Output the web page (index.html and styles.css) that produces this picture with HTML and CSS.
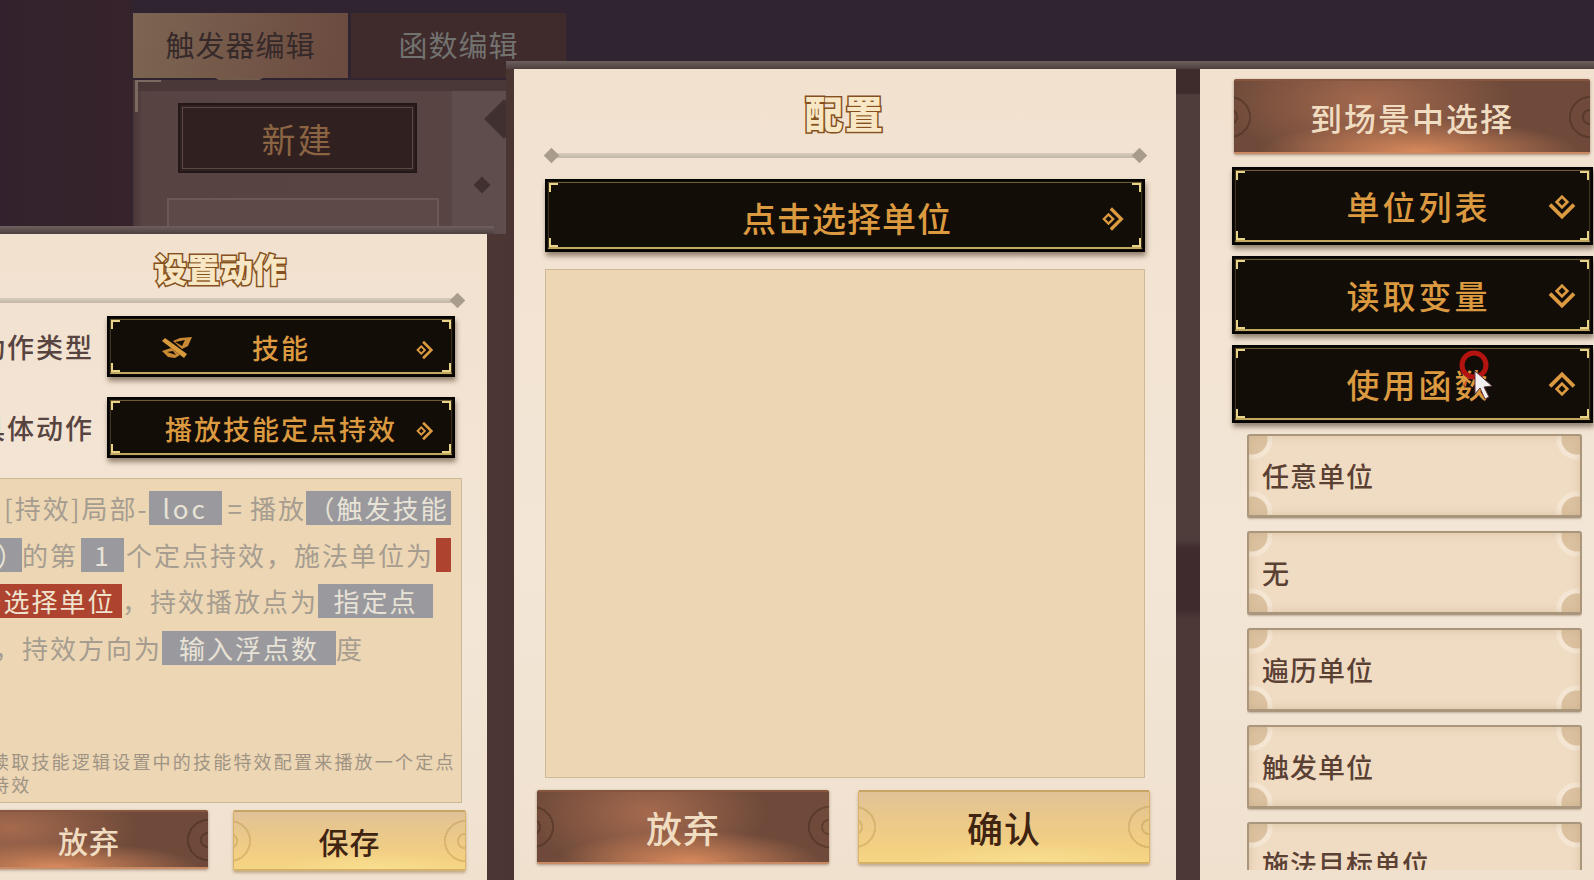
FILE: index.html
```html
<!DOCTYPE html>
<html lang="zh-CN">
<head>
  <meta charset="UTF-8">
  <title>触发器编辑</title>
  <link rel="stylesheet" href="styles.css">
</head>
<body>
  <svg class="defs" width="0" height="0">
    <symbol id="arrow" viewBox="0 0 24 24">
      <path d="M5 12l4-4 4 4-4 4z" fill="none" stroke="currentColor" stroke-width="2"/>
      <path d="M12 2l10 10-10 10-2-2 8-8-8-8z" fill="currentColor"/>
    </symbol>
  </svg>

  <div class="stage">

    <!-- 后面的触发器窗口 -->
    <div class="win win-back">
      <div class="tabs">
        <div class="tab tab-on">触发器编辑</div>
        <div class="tab">函数编辑</div>
      </div>
      <div class="back-body">
        <span class="back-corner"></span>
        <div class="back-main">
          <div class="btn-new">新建</div>
          <div class="back-slot"></div>
        </div>
        <div class="back-side">
          <span class="back-gem back-gem-a"></span>
          <span class="back-gem back-gem-b"></span>
        </div>
      </div>
    </div>

    <!-- 设置动作 -->
    <div class="win win-left">
      <div class="win-bar"></div>
      <div class="panel left-panel">
        <div class="title title-left">设置动作</div>
        <div class="divider divider-left"></div>
        <div class="field">
          <div class="field-label">动作类型</div>
          <div class="dark-btn dark-sm">
            <svg class="skill-icon" viewBox="0 0 32 24">
              <path d="M1 5l3-3 22 16-3 4z" fill="#d99a3c"/>
              <path d="M12 5l7-3 12-1-4 9-6 3z" fill="#c98a34"/>
              <path d="M14 6l10-2-3 6z" fill="#160e08"/>
              <path d="M1 15l9-3 9 7-5 3-7-1z" fill="#c98a34"/>
              <path d="M6 16l6-1 3 4z" fill="#160e08"/>
            </svg>
            <span class="dark-text">技能</span>
            <svg class="arrow arrow-sm"><use href="#arrow"/></svg>
          </div>
        </div>
        <div class="field">
          <div class="field-label">具体动作</div>
          <div class="dark-btn dark-sm">
            <span class="dark-text">播放技能定点持效</span>
            <svg class="arrow arrow-sm"><use href="#arrow"/></svg>
          </div>
        </div>
        <div class="text-box desc-box">
          <div class="desc-line line-a">[持效]局部-<span class="hl hl-loc">loc</span><span class="eq">=</span>播放<span class="hl hl-skill">（触发技能</span></div>
          <div class="desc-line"><span class="hl hl-end">技能）</span>的第<span class="hl hl-num">1</span>个定点持效，施法单位为<span class="hl hl-red hl-stub"></span></div>
          <div class="desc-line"><span class="hl hl-red">点击选择单位</span>，持效播放点为<span class="hl hl-point">指定点</span></div>
          <div class="desc-line line-d">，持效方向为<span class="hl hl-float">输入浮点数</span>度</div>
          <div class="desc-note">读取技能逻辑设置中的技能特效配置来播放一个定点<br>持效</div>
        </div>
        <div class="btn-row btn-row-left">
          <div class="btn btn-brown btn-left-give">放弃</div>
          <div class="btn btn-gold btn-left-save">保存</div>
        </div>
      </div>
    </div>

    <!-- 配置 -->
    <div class="win win-mid">
      <div class="win-bar"></div>
      <div class="panel mid-panel">
        <div class="title title-mid">配置</div>
        <div class="divider divider-mid"></div>
        <div class="dark-btn dark-mid">
          <span class="dark-text dark-text-mid">点击选择单位</span>
          <svg class="arrow arrow-mid"><use href="#arrow"/></svg>
        </div>
        <div class="text-box mid-box"></div>
        <div class="btn-row btn-row-mid">
          <div class="btn btn-brown">放弃</div>
          <div class="btn btn-gold">确认</div>
        </div>
      </div>
    </div>

    <!-- 右侧选择列表 -->
    <div class="win win-right">
      <div class="win-bar"></div>
      <div class="panel right-panel">
        <div class="btn btn-brown btn-scene">到场景中选择</div>
        <div class="dark-btn dark-lg">
          <span class="dark-text dark-text-lg">单位列表</span>
          <svg class="arrow arrow-down"><use href="#arrow"/></svg>
        </div>
        <div class="dark-btn dark-lg">
          <span class="dark-text dark-text-lg">读取变量</span>
          <svg class="arrow arrow-down"><use href="#arrow"/></svg>
        </div>
        <div class="dark-btn dark-lg">
          <span class="dark-text dark-text-lg">使用函数</span>
          <svg class="arrow arrow-up"><use href="#arrow"/></svg>
        </div>
        <div class="pick-list">
          <div class="pick">任意单位</div>
          <div class="pick">无</div>
          <div class="pick">遍历单位</div>
          <div class="pick">触发单位</div>
          <div class="pick">施法目标单位</div>
        </div>
      </div>
    </div>

    <!-- 录屏鼠标 -->
    <svg class="cursor" viewBox="0 0 40 60">
      <circle cx="18" cy="15" r="12" fill="none" stroke="#b3140f" stroke-width="5"/>
      <path d="M11 30l-4 4 3 3z" fill="#e0662a"/>
      <path d="M19 21l0 23 5-6 5 11 4-2-5-10 8-1z" fill="#f4efef" stroke="#5b3540" stroke-width="1"/>
    </svg>

  </div>
</body>
</html>
```

FILE: styles.css
```css
* {
  box-sizing: border-box;
}

html, body {
  margin: 0;
  height: 100%;
  overflow: hidden;
}

body {
  background: #2e2330;
  font-family: "Noto Sans CJK SC", "Noto Sans", sans-serif;
}

.defs {
  position: absolute;
}

.stage {
  position: relative;
  width: 1594px;
  height: 880px;
  overflow: hidden;
  background: linear-gradient(90deg, #33222d 0, #36232b 130px, #2f2430 135px);
}

.win {
  position: absolute;
}

/* 后面的窗口 */
.win-back {
  left: 133px;
  top: 13px;
  width: 1440px;
  height: 867px;
}

.tabs {
  display: flex;
  gap: 3px;
  height: 67px;
}

.tab {
  width: 215px;
  height: 65px;
  padding-bottom: 4px;
  display: flex;
  align-items: center;
  justify-content: center;
  font-size: 29px;
  letter-spacing: 1px;
  color: #72726f;
  background: #3f2a2c;
}

.tab-on {
  position: relative;
  color: #36292a;
  background: linear-gradient(100deg, #7c6552, #6b4a3f);
}

.tab-on::after {
  content: "";
  position: absolute;
  left: 82px;
  bottom: -13px;
  border-left: 24px solid transparent;
  border-right: 24px solid transparent;
  border-top: 13px solid #735b4b;
}

.back-body {
  position: relative;
  display: flex;
  height: 100%;
  background: linear-gradient(90deg, #4a3638 0, #574342 10px, #5c4846 100%);
  border-top: 11px solid #493837;
}

.back-corner {
  position: absolute;
  left: 2px;
  top: -11px;
  width: 26px;
  height: 32px;
  border-top: 2px solid #7a6a62;
  border-left: 3px solid #7a6a62;
}

.back-main {
  width: 318px;
  padding: 12px 0 0 45px;
}

.btn-new {
  width: 239px;
  height: 70px;
  display: flex;
  align-items: center;
  justify-content: center;
  font-size: 34px;
  letter-spacing: 2px;
  color: #8b6443;
  background: #30201f;
  border: 2px solid #241816;
  outline: 1px solid #5a4a42;
  outline-offset: -5px;
}

.back-slot {
  width: 272px;
  height: 60px;
  margin: 25px 0 0 -11px;
  background: #5d4a48;
  border: 2px solid #6b5956;
}

.back-side {
  position: relative;
  flex: 1;
  background: #5f4c4c;
  border-left: 1px solid #574443;
}

.back-gem {
  position: absolute;
  background: #40302f;
  transform: rotate(45deg);
}

.back-gem-a {
  left: 38px;
  top: 14px;
  width: 28px;
  height: 28px;
}

.back-gem-b {
  left: 24px;
  top: 88px;
  width: 12px;
  height: 12px;
}

/* 米色面板 */
.win-left {
  left: -110px;
  top: 226px;
  width: 604px;
  height: 654px;
}

.win-mid {
  left: 506px;
  top: 61px;
  width: 681px;
  height: 819px;
  background: #4a3533;
}

.win-right {
  left: 1170px;
  top: 61px;
  width: 424px;
  height: 819px;
}

.win-bar {
  height: 8px;
  background: linear-gradient(#6f6060, #4f4040);
}

.panel {
  background: linear-gradient(#f2e1cf, #f3e6d6 60%, #f0e1cf);
  height: calc(100% - 8px);
}

.left-panel {
  width: 597px;
  padding-left: 110px;
  padding-right: 25px;
  box-shadow: 30px 0 0 #4b3633;
}

.mid-panel {
  width: 662px;
  margin-left: 8px;
  padding: 0 31px 0 31px;
}

.right-panel {
  margin-left: 30px;
  padding: 10px 2px 0 34px;
}

.win-right::before {
  content: "";
  position: absolute;
  left: 6px;
  top: 8px;
  width: 24px;
  height: 811px;
  background: linear-gradient(#3e2c2c 0, #3e2c2c 24px, #4f3d3c 26px, #4f3d3c 470px, #3f2a2e 480px, #3f2a2e 540px, #4c3836 550px);
}

.title {
  display: flex;
  align-items: center;
  justify-content: center;
  font-weight: 900;
  color: #f8e7c4;
  -webkit-text-stroke: 3px #85501f;
  paint-order: stroke fill;
}

.title-left {
  height: 64px;
  padding-top: 3px;
  font-size: 33px;
  width: 440px;
}

.title-mid {
  height: 84px;
  font-size: 38px;
  letter-spacing: 2px;
}

.divider {
  position: relative;
  height: 5px;
  background: linear-gradient(#d8ccbc, #c2b6a6);
}

.divider::after {
  content: "";
  position: absolute;
  right: -4px;
  top: -3px;
  width: 11px;
  height: 11px;
  background: #a89c8c;
  transform: rotate(45deg);
}

.divider-left {
  margin-right: 3px;
}

.divider-mid {
  margin: 0 4px 0 5px;
}

.divider-mid::before {
  content: "";
  position: absolute;
  left: -4px;
  top: -3px;
  width: 11px;
  height: 11px;
  background: #a89c8c;
  transform: rotate(45deg);
}

/* 黑色按钮 */
.dark-btn {
  position: relative;
  display: flex;
  flex: none;
  align-items: center;
  justify-content: center;
  background: #130d08;
  border: 2px solid #060402;
  box-shadow: 1px 4px 5px rgba(70, 50, 30, 0.55);
  color: #dc9a40;
}

.dark-btn::before {
  content: "";
  position: absolute;
  inset: 1px;
  border: 1px solid #3f3420;
  border-top-color: #6f5c34;
  border-bottom: 2px solid #c3a862;
  --c: #e8d488;
  background:
    linear-gradient(var(--c), var(--c)) left top / 9px 2px,
    linear-gradient(var(--c), var(--c)) left top / 2px 9px,
    linear-gradient(var(--c), var(--c)) right top / 9px 2px,
    linear-gradient(var(--c), var(--c)) right top / 2px 9px,
    linear-gradient(var(--c), var(--c)) left bottom / 9px 2px,
    linear-gradient(var(--c), var(--c)) left bottom / 2px 9px,
    linear-gradient(var(--c), var(--c)) right bottom / 9px 2px,
    linear-gradient(var(--c), var(--c)) right bottom / 2px 9px;
  background-repeat: no-repeat;
}

.dark-text {
  font-weight: 500;
}

.dark-sm {
  width: 348px;
  height: 61px;
}

.dark-sm .dark-text {
  font-size: 27px;
  letter-spacing: 2px;
  padding-top: 2px;
}

.skill-icon {
  position: absolute;
  left: 52px;
  top: 18px;
  width: 32px;
  height: 24px;
}

.arrow {
  position: absolute;
}

.arrow-sm {
  right: 18px;
  top: 21px;
  width: 22px;
  height: 22px;
}

.dark-mid {
  height: 73px;
  margin: 21px 0 0 0;
}

.dark-text-mid {
  font-size: 34px;
  letter-spacing: 1px;
  margin-right: -4px;
  padding-top: 3px;
}

.arrow-mid {
  right: 17px;
  top: 24px;
  width: 28px;
  height: 28px;
}

.dark-lg {
  width: 361px;
  height: 78px;
  margin-top: 11px;
  margin-left: -2px;
}

.btn-scene + .dark-lg {
  margin-top: 13px;
}

.dark-text-lg {
  font-size: 33px;
  letter-spacing: 3px;
  margin-left: 12px;
}

.arrow-down {
  right: 13px;
  top: 21px;
  width: 32px;
  height: 32px;
  transform: rotate(90deg);
}

.arrow-up {
  right: 13px;
  top: 22px;
  width: 32px;
  height: 32px;
  transform: rotate(-90deg);
}

/* 表单 */
.field {
  display: flex;
  align-items: center;
  justify-content: flex-end;
  gap: 13px;
  margin-top: 12px;
  padding-right: 7px;
  margin-bottom: 20px;
}

.divider + .field {
  margin-top: 13px;
}

.field + .field {
  margin-top: 0;
}

.field-label {
  font-size: 27px;
  font-weight: 500;
  letter-spacing: 2px;
  color: #574440;
  white-space: nowrap;
}

.text-box {
  background: #ecd6b4;
  border: 1px solid #cdb995;
}

.desc-box {
  position: relative;
  height: 325px;
  margin: 0 0 0 -60px;
  padding: 12px 0 0 0;
  overflow: hidden;
  color: #a69d90;
  font-size: 26px;
  letter-spacing: 2px;
  white-space: nowrap;
}

.desc-line {
  height: 46.7px;
  line-height: 34px;
}

.line-a {
  padding-left: 63px;
}

.line-d {
  padding-left: 53px;
}

.hl {
  display: inline-block;
  height: 34px;
  vertical-align: top;
  text-align: center;
  background: #9a9a9e;
  color: #e8e3d6;
}

.hl-loc {
  width: 73px;
  letter-spacing: 3px;
}

.eq {
  margin: 0 6px;
}

.hl-skill {
  width: 145px;
}

.hl-end {
  width: 81px;
}

.hl-num {
  width: 43px;
  margin: 0 2px 0 3px;
}

.hl-red {
  background: #ae4330;
  color: #efe3ce;
  width: 181px;
}

.hl-stub {
  width: 15px;
  margin-left: 2px;
}

.hl-point {
  width: 115px;
}

.hl-float {
  width: 174px;
}

.desc-note {
  position: absolute;
  left: 0;
  top: 271px;
  padding-left: 50px;
  font-size: 18px;
  line-height: 23px;
  letter-spacing: 2.2px;
  color: #9f9484;
}

/* 底部按钮 */
.btn-row {
  display: flex;
}

.btn-row-left {
  justify-content: space-between;
  margin: 7px -4px 0 0;
}

.btn-row-mid {
  justify-content: space-between;
  margin: 12px -5px 0 -8px;
}

.btn {
  position: relative;
  overflow: hidden;
  display: flex;
  align-items: center;
  justify-content: center;
  width: 292px;
  height: 74px;
  font-size: 36px;
  font-weight: 500;
  letter-spacing: 1px;
  border-radius: 2px;
}

.btn::before,
.btn::after {
  content: "";
  position: absolute;
  top: 50%;
  width: 56px;
  height: 56px;
  margin-top: -28px;
  border-radius: 50%;
  background: repeating-radial-gradient(circle, transparent 0 6px, var(--ring) 6px 8px, transparent 8px 13px);
}

.btn::before {
  left: -32px;
}

.btn::after {
  right: -28px;
}

.btn-brown {
  --ring: rgba(60, 36, 26, 0.4);
  color: #f0dcc0;
  background:
    radial-gradient(ellipse 45% 45% at 52% 100%, #d98a5c, rgba(190, 110, 75, 0) 100%),
    radial-gradient(ellipse 40% 90% at 38% 30%, #a56a4e, rgba(160, 100, 75, 0) 100%),
    #6f4a3a;
  box-shadow: 0 1px 3px rgba(90, 60, 40, 0.5);
  border-top: 2px solid #87563f;
  border-bottom: 2px solid #c98a64;
}

.btn-gold {
  --ring: rgba(190, 150, 80, 0.4);
  color: #3f2412;
  background:
    radial-gradient(ellipse 40% 30% at 60% 100%, #f8de90, rgba(248, 222, 144, 0) 100%),
    linear-gradient(#e1c298 0, #e7c68e 25%, #f2cf82 75%, #f5d683 100%);
  border: 1px solid #d8b368;
  border-top: 2px solid #c7a564;
  border-bottom: 2px solid #d5b069;
  box-shadow: 0 2px 3px rgba(120, 90, 50, 0.4);
}

.btn-left-give {
  width: 318px;
  height: 59px;
  font-size: 30px;
  margin-left: -110px;
  padding-left: 80px;
}

.btn-left-save {
  width: 233px;
  height: 61px;
  font-size: 30px;
}

/* 配置 */
.mid-box {
  height: 509px;
  margin-top: 17px;
}

/* 右侧 */
.btn-scene {
  width: 356px;
  height: 75px;
  margin-top: 0;
  font-size: 32px;
  letter-spacing: 2px;
}

.pick-list {
  margin: 11px 0 0 13px;
  width: 335px;
  height: 436px;
  overflow: hidden;
  display: flex;
  flex-direction: column;
  gap: 13px;
}

.pick {
  flex: 0 0 84px;
  display: flex;
  align-items: center;
  padding-left: 13px;
  font-size: 27px;
  font-weight: 500;
  color: #5b4034;
  letter-spacing: 1px;
  border: 2px solid #aa957d;
  border-bottom-width: 3px;
  border-radius: 3px;
  --m: #dcc2a0;
  --n: #f4e6d3;
  background:
    radial-gradient(circle at 3px 3px, var(--m) 15px, var(--n) 16px, var(--n) 20px, transparent 21px),
    radial-gradient(circle at calc(100% - 3px) 3px, var(--m) 15px, var(--n) 16px, var(--n) 20px, transparent 21px),
    radial-gradient(circle at 3px calc(100% - 3px), var(--m) 15px, var(--n) 16px, var(--n) 20px, transparent 21px),
    radial-gradient(circle at calc(100% - 3px) calc(100% - 3px), var(--m) 15px, var(--n) 16px, var(--n) 20px, transparent 21px),
    #f0dcc3;
  box-shadow: inset 0 0 8px rgba(190, 160, 125, 0.45), 0 1px 2px rgba(120, 95, 70, 0.4);
}

/* 鼠标 */
.cursor {
  position: absolute;
  left: 1456px;
  top: 350px;
  width: 40px;
  height: 60px;
}
```
